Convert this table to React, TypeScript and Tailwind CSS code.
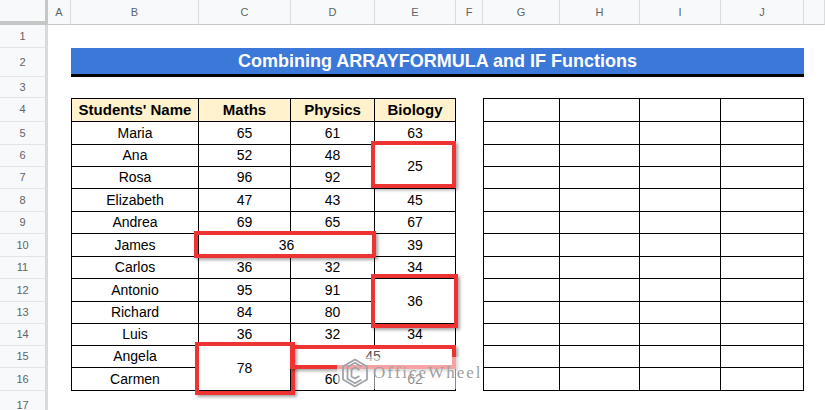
import React from 'react';

const columns = [
  { label: 'A', w: 'w-[23px]' },
  { label: 'B', w: 'w-[128px]' },
  { label: 'C', w: 'w-[92px]' },
  { label: 'D', w: 'w-[84px]' },
  { label: 'E', w: 'w-[81px]' },
  { label: 'F', w: 'w-[27px]' },
  { label: 'G', w: 'w-[77px]' },
  { label: 'H', w: 'w-[80px]' },
  { label: 'I', w: 'w-[81px]' },
  { label: 'J', w: 'w-[83px]' },
  { label: '', w: 'flex-1' },
];

const rowHeights = [
  'h-[23px]', 'h-[29px]', 'h-[21px]', 'h-[24px]', 'h-[23px]', 'h-[22px]', 'h-[22px]', 'h-[23px]', 'h-[22px]',
  'h-[23px]', 'h-[22px]', 'h-[23px]', 'h-[22px]', 'h-[22px]', 'h-[22px]', 'h-[23px]', 'h-[30px]',
];

type Cell = { text: string; span?: string; box?: string; faded?: boolean };

// cells in reading order, merged cells carry span + the red highlight offsets
const rows: Cell[][] = [
  [{ text: 'Maria' }, { text: '65' }, { text: '61' }, { text: '63' }],
  [{ text: 'Ana' }, { text: '52' }, { text: '48' }, { text: '25', span: 'row-span-2', box: '-left-[4px] -top-[4px] -right-[1px] bottom-0' }],
  [{ text: 'Rosa' }, { text: '96' }, { text: '92' }],
  [{ text: 'Elizabeth' }, { text: '47' }, { text: '43' }, { text: '45' }],
  [{ text: 'Andrea' }, { text: '69' }, { text: '65' }, { text: '67' }],
  [{ text: 'James' }, { text: '36', span: 'col-span-2', box: '-left-[5px] -top-[3px] -right-[2px] -bottom-[2px]' }, { text: '39' }],
  [{ text: 'Carlos' }, { text: '36' }, { text: '32' }, { text: '34' }],
  [{ text: 'Antonio' }, { text: '95' }, { text: '91' }, { text: '36', span: 'row-span-2', box: '-left-[4px] -top-[5px] -right-[3px] -bottom-[5px]' }],
  [{ text: 'Richard' }, { text: '84' }, { text: '80' }],
  [{ text: 'Luis' }, { text: '36' }, { text: '32' }, { text: '34' }],
  [{ text: 'Angela' }, { text: '78', span: 'row-span-2', box: '-left-[4px] -top-[4px] -right-[5px] -bottom-[5px]' }, { text: '45', span: 'col-span-2', box: '-left-[1px] -top-[1px] -right-[1px] -bottom-[2px]', faded: true }],
  [{ text: 'Carmen' }, { text: '60' }, { text: '62' }],
];

const heads = ["Students' Name", 'Maths', 'Physics', 'Biology'];

const tableRows = 'grid-rows-[23px_23px_22px_22px_23px_22px_23px_22px_23px_22px_22px_22px_23px]';

function Logo() {
  return (
    <svg width="28" height="30" viewBox="0 0 28 30" fill="none" stroke="#a0a4a8" strokeWidth="1.8" strokeLinejoin="round">
      <path d="M14 1.5 L26 8.5 L26 21.5 L14 28.5 L2 21.5 L2 8.5 Z" />
      <path d="M20.5 8.5 L14 4.8 L6.5 9 L6.5 21 L14 25.2 L20.5 21.5" />
      <path d="M18.5 12 L14 9.5 L10.5 11.5 L10.5 18.5 L14 20.5 L18.5 18" />
    </svg>
  );
}

export default function App() {
  return (
    <div className="relative w-[825px] h-[410px] overflow-hidden bg-white font-['Liberation_Sans',Arial,sans-serif]">
      {/* column letters */}
      <div className="flex h-[25px]">
        <div className="w-[48px] h-[25px] bg-[#f8f9fa] border-r-[3px] border-b-[4px] border-[#c4c7c5]" />
        {columns.map((c, i) => (
          <div
            key={i}
            className={`${c.w} h-[25px] flex items-center justify-center bg-[#f8f9fa] border-r border-b border-r-[#dadce0] border-b-[#c4c7c5] text-[11px] text-[#5f6368]`}
          >
            {c.label}
          </div>
        ))}
      </div>

      <div className="flex">
        {/* row numbers */}
        <div className="w-[48px] shrink-0 flex flex-col">
          {rowHeights.map((h, i) => (
            <div
              key={i}
              className={`${h} flex items-center justify-center bg-[#f8f9fa] border-b border-r-[3px] border-b-[#e2e3e3] border-r-[#d9dadb] text-[11px] text-[#5f6368]`}
            >
              {i + 1}
            </div>
          ))}
        </div>

        {/* sheet body */}
        <div className="flex-1 flex flex-col">
          <div className="h-[23px]" />
          <div className="ml-[23px] w-[733px] h-[29px] bg-[#3c78d8] border-b-[3px] border-black flex items-center justify-center text-white font-bold text-[18px]">
            Combining ARRAYFORMULA and IF Functions
          </div>
          <div className="h-[21px]" />

          <div className="flex ml-[23px] gap-[27px]">
            <div className={`grid grid-cols-[127px_92px_84px_81px] ${tableRows} border-l border-t border-black text-black`}>
              {heads.map((h) => (
                <div key={h} className="flex items-center justify-center border-r border-b border-black bg-[#fff2cc] font-bold text-[15px]">
                  {h}
                </div>
              ))}
              {rows.map((r, ri) =>
                r.map((c, ci) => (
                  <div
                    key={`${ri}-${ci}`}
                    className={`relative flex items-center justify-center border-r border-b border-black text-[14px] ${c.span ?? ''} ${c.faded ? 'text-[#555]' : ''}`}
                  >
                    {c.text}
                    {c.box && (
                      <div className={`absolute z-10 ${c.box} border-4 border-[#ee3333] shadow-[2px_2px_3px_rgba(0,0,0,0.35)]`} />
                    )}
                  </div>
                ))
              )}
            </div>

            <div className={`grid grid-cols-[76px_80px_81px_83px] ${tableRows} border-l border-t border-black`}>
              {Array.from({ length: 52 }).map((_, i) => (
                <div key={i} className="border-r border-b border-black" />
              ))}
            </div>
          </div>
        </div>
      </div>

      {/* watermark */}
      <div className="absolute z-20 left-[337px] top-[357px] w-[146px] h-[32px] bg-white/55 flex items-center gap-[4px] pl-[4px] overflow-hidden">
        <Logo />
        <span className="font-['Liberation_Serif',serif] text-[17px] tracking-[2px] text-[#a0a0a0] whitespace-nowrap">OfficeWheel</span>
      </div>
    </div>
  );
}
